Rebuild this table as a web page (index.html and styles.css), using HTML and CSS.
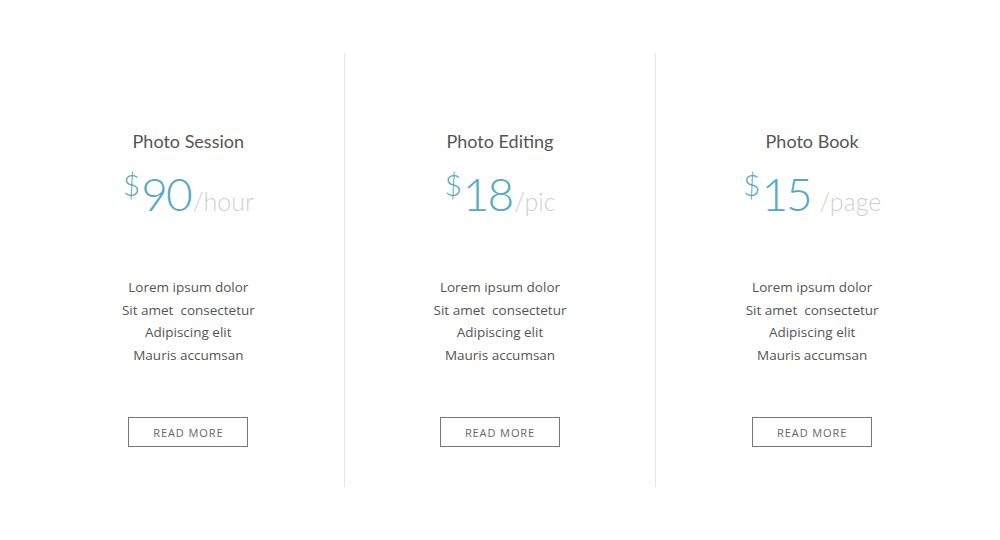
FILE: index.html
```html
<!DOCTYPE html>
<html>
<head>
<meta charset="utf-8">
<link rel="stylesheet" href="styles.css">
</head>
<body>
<div class="pricing">
  <div class="plan">
    <h3 class="title">Photo Session</h3>
    <div class="price"><span class="cur">$</span><span class="amt">90</span><span class="unit">/hour</span></div>
    <ul class="features">
      <li>Lorem ipsum dolor</li>
      <li>Sit amet&nbsp; consectetur</li>
      <li>Adipiscing elit</li>
      <li>Mauris accumsan</li>
    </ul>
    <a class="btn">READ MORE</a>
  </div>
  <div class="plan">
    <h3 class="title">Photo Editing</h3>
    <div class="price"><span class="cur">$</span><span class="amt">18</span><span class="unit">/pic</span></div>
    <ul class="features">
      <li>Lorem ipsum dolor</li>
      <li>Sit amet&nbsp; consectetur</li>
      <li>Adipiscing elit</li>
      <li>Mauris accumsan</li>
    </ul>
    <a class="btn">READ MORE</a>
  </div>
  <div class="plan">
    <h3 class="title">Photo Book</h3>
    <div class="price"><span class="cur">$</span><span class="amt">15</span><span class="unit">&nbsp;/page</span></div>
    <ul class="features">
      <li>Lorem ipsum dolor</li>
      <li>Sit amet&nbsp; consectetur</li>
      <li>Adipiscing elit</li>
      <li>Mauris accumsan</li>
    </ul>
    <a class="btn">READ MORE</a>
  </div>
</div>
</body>
</html>
```
FILE: styles.css
```css
html, body {
  margin: 0;
  padding: 0;
  background: #fff;
}
body {
  font-family: "Open Sans", "Liberation Sans", sans-serif;
  color: #555;
}
.pricing {
  display: grid;
  grid-template-columns: repeat(3, 1fr);
  padding: 53px 32px 0 33px;
  width: 935px;
}
.plan {
  display: flex;
  flex-direction: column;
  align-items: center;
  height: 434px;
  border-right: 1px solid #e6e6e6;
}
.plan:last-child {
  border-right: none;
}
.title {
  margin: 76px 0 0;
  font-family: Lato, "Open Sans", sans-serif;
  font-weight: 400;
  font-size: 18px;
  line-height: 24px;
  color: #555;
}
.price {
  margin-top: 13px;
  height: 56px;
  display: flex;
  align-items: baseline;
  font-family: Lato, sans-serif;
  font-weight: 300;
  color: #56a9c4;
}
.cur {
  font-size: 30px;
  position: relative;
  top: -15px;
  margin-right: 1px;
}
.amt {
  font-size: 46px;
  letter-spacing: -2px;
}
.unit {
  font-size: 25px;
  color: #cfcfcf;
  margin-left: 2px;
}
.features {
  list-style: none;
  margin: 54px 0 0;
  padding: 0;
  text-align: center;
  font-size: 13.5px;
  line-height: 22.5px;
  color: #555;
}
.btn {
  margin-top: 51px;
  width: 118px;
  height: 28px;
  border: 1px solid #777;
  display: flex;
  align-items: center;
  justify-content: center;
  font-size: 11px;
  letter-spacing: 0.9px;
  color: #666;
}
```
